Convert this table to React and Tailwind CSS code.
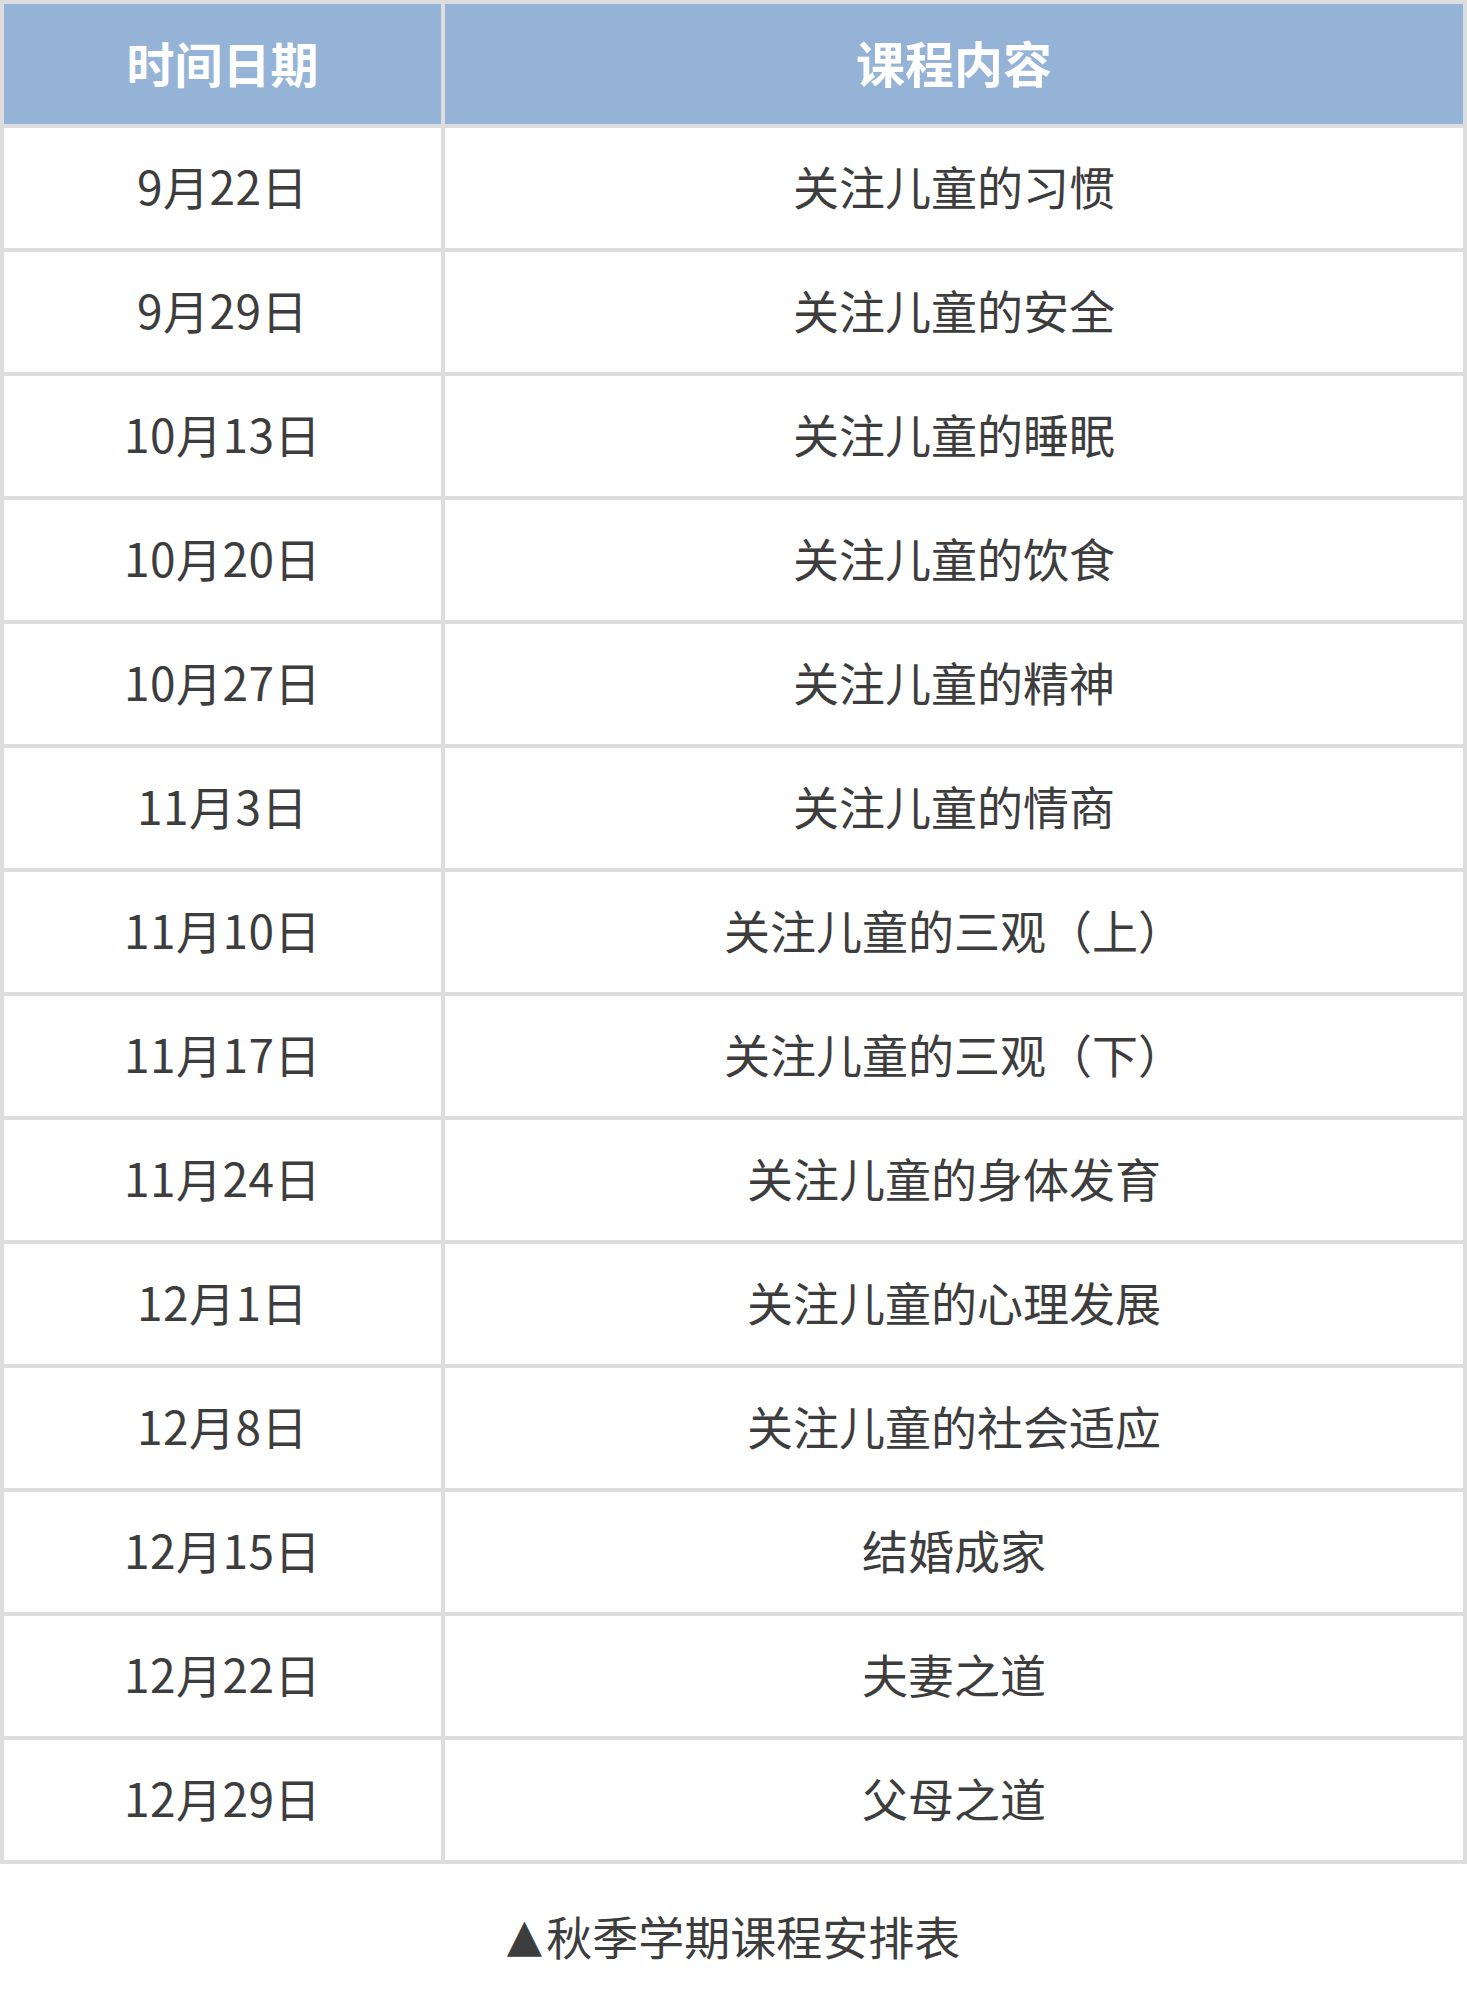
import React from 'react';

const rows = [
  ['9月22日', '关注儿童的习惯'],
  ['9月29日', '关注儿童的安全'],
  ['10月13日', '关注儿童的睡眠'],
  ['10月20日', '关注儿童的饮食'],
  ['10月27日', '关注儿童的精神'],
  ['11月3日', '关注儿童的情商'],
  ['11月10日', '关注儿童的三观（上）'],
  ['11月17日', '关注儿童的三观（下）'],
  ['11月24日', '关注儿童的身体发育'],
  ['12月1日', '关注儿童的心理发展'],
  ['12月8日', '关注儿童的社会适应'],
  ['12月15日', '结婚成家'],
  ['12月22日', '夫妻之道'],
  ['12月29日', '父母之道'],
];

const font = { fontFamily: '"Noto Sans CJK SC", "Noto Sans", sans-serif' };

export default function App() {
  return (
    <div className="w-[1467px] bg-white" style={font}>
      {/* 表格 */}
      <div className="grid grid-cols-[437px_1018px] gap-1 p-1 bg-[#dddddd]">
        <div className="h-[120px] pb-[5px] bg-[#95b3d7] flex items-center justify-center text-white font-bold text-[48px]">
          时间日期
        </div>
        <div className="h-[120px] pb-[5px] bg-[#95b3d7] flex items-center justify-center text-white font-bold text-[49px]">
          课程内容
        </div>
        {rows.map(([date, topic]) => (
          <React.Fragment key={date}>
            <div className="h-[120px] pb-[5px] bg-white flex items-center justify-center text-[46px] tracking-[0.5px] text-[#3d3d3d]">
              {date}
            </div>
            <div className="h-[120px] pb-[5px] bg-white flex items-center justify-center text-[46px] text-[#3d3d3d]">
              {topic}
            </div>
          </React.Fragment>
        ))}
      </div>

      {/* 标题 */}
      <div className="h-[145px] pb-[3px] flex items-center justify-center text-[46px] text-[#3d3d3d]">
        <span className="mr-[4px]" style={{ fontFamily: '"DejaVu Sans", sans-serif' }}>▲</span>
        秋季学期课程安排表
      </div>
    </div>
  );
}
